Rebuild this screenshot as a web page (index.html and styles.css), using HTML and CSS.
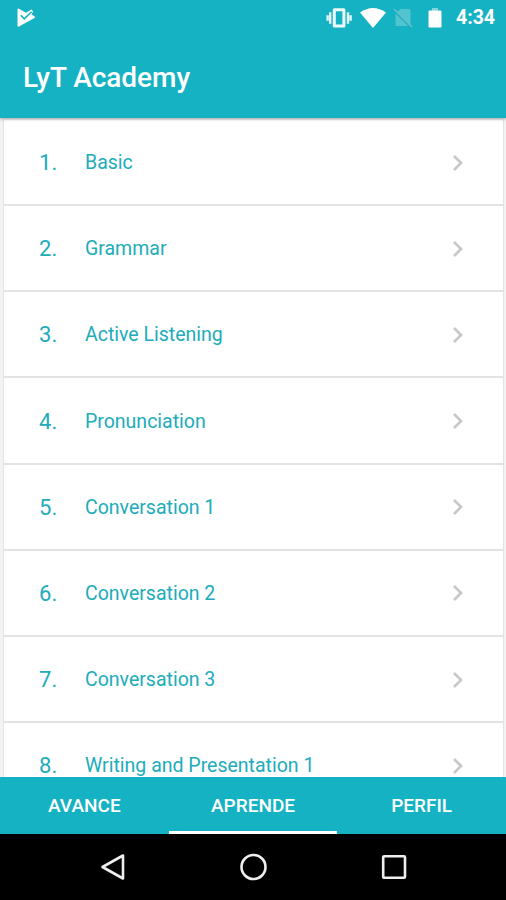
FILE: index.html
```html
<!DOCTYPE html>
<html lang="es">
<head>
<meta charset="utf-8">
<title>LyT Academy</title>
<link rel="stylesheet" href="styles.css">
</head>
<body>
<div class="screen">
  <header class="header">
    <div class="status">
      <svg class="notice" width="20" height="20" viewBox="0 0 20 20"><path fill="#fff" d="M1.5 1.5Q1.5 0 3 .8L10 4.8L15.5 1.5L17 3.5L15.5 6.5L18.8 8.5Q19.5 9.3 18.5 10L3 18.6Q1.5 19.2 1.5 17.8Z"/><path d="M4.8 7.2L8.3 10.8L15.6 3.7" fill="none" stroke="#14b2c3" stroke-width="1.6"/></svg>
      <svg width="27" height="20" viewBox="0 0 27 20"><path fill="none" stroke="#fff" stroke-opacity=".93" stroke-width="3" stroke-linejoin="round" d="M8.3 1.8h9.6v16.2H8.3z"/><path stroke="#fff" stroke-opacity=".88" stroke-width="2.4" d="M4.2 4.2v11.6M22 4.2v11.6M1.6 7.2v5.6M24.6 7.2v5.6"/></svg>
      <svg class="wifi" width="26" height="20" viewBox="0 0 26 20"><path fill="#fff" d="M0 4.5Q13-4.5 26 4.5L13 20Z"/></svg>
      <svg class="sim" width="20" height="20" viewBox="0 0 20 20"><path fill="#51c4d0" d="M7.5 1H16q1.5 0 1.5 1.5V18H2.5V6Z"/><path d="M1 2.5L18.5 20" stroke="#14b2c3" stroke-width="2"/><path d="M1 1L19 19" stroke="#6cbfc6" stroke-width="1.6"/></svg>
      <svg class="battery" width="14" height="20" viewBox="0 0 14 20"><path fill="#7dd4dc" d="M4 0h6v3H4z"/><path fill="#fff" d="M1.5 2.5h11q1 0 1 1v15q0 1-1 1h-11q-1 0-1-1v-15q0-1 1-1z"/></svg>
      <span class="time">4:34</span>
    </div>
    <h1 class="title">LyT Academy</h1>
  </header>
  <main class="list">
    <div class="row"><span class="num">1.</span><span class="name">Basic</span><svg class="chev" viewBox="0 0 12 18"><path d="M2 2l7 7-7 7"/></svg></div>
    <div class="row"><span class="num">2.</span><span class="name">Grammar</span><svg class="chev" viewBox="0 0 12 18"><path d="M2 2l7 7-7 7"/></svg></div>
    <div class="row"><span class="num">3.</span><span class="name">Active Listening</span><svg class="chev" viewBox="0 0 12 18"><path d="M2 2l7 7-7 7"/></svg></div>
    <div class="row"><span class="num">4.</span><span class="name">Pronunciation</span><svg class="chev" viewBox="0 0 12 18"><path d="M2 2l7 7-7 7"/></svg></div>
    <div class="row"><span class="num">5.</span><span class="name">Conversation 1</span><svg class="chev" viewBox="0 0 12 18"><path d="M2 2l7 7-7 7"/></svg></div>
    <div class="row"><span class="num">6.</span><span class="name">Conversation 2</span><svg class="chev" viewBox="0 0 12 18"><path d="M2 2l7 7-7 7"/></svg></div>
    <div class="row"><span class="num">7.</span><span class="name">Conversation 3</span><svg class="chev" viewBox="0 0 12 18"><path d="M2 2l7 7-7 7"/></svg></div>
    <div class="row"><span class="num">8.</span><span class="name">Writing and Presentation 1</span><svg class="chev" viewBox="0 0 12 18"><path d="M2 2l7 7-7 7"/></svg></div>
  </main>
  <nav class="tabs">
    <div class="tab">AVANCE</div>
    <div class="tab active">APRENDE</div>
    <div class="tab">PERFIL</div>
  </nav>
  <footer class="system">
    <svg width="28" height="30" viewBox="0 0 28 30"><path d="M24 3.5v23L3.5 15z"/></svg>
    <svg width="28" height="30" viewBox="0 0 28 30"><circle cx="14.5" cy="15" r="12"/></svg>
    <svg width="28" height="30" viewBox="0 0 28 30"><rect x="3.2" y="4.2" width="21.8" height="21.6" rx="1"/></svg>
  </footer>
</div>
</body>
</html>
```
FILE: styles.css
```css
* { box-sizing: border-box; }
body { margin: 0; font-family: Roboto, "Liberation Sans", sans-serif; }
.screen { display: flex; flex-direction: column; width: 506px; height: 900px; overflow: hidden; background: #fff; }
.header { position: relative; z-index: 1; flex: 0 0 118px; background: #14b2c3; color: #fff; box-shadow: 0 1px 3px rgba(0, 0, 0, .35); }
.status { display: flex; align-items: center; height: 35px; padding: 0 11px 0 16px; }
.notice { margin-right: auto; }
.wifi { margin-left: 7px; }
.sim { margin-left: 7px; }
.battery { margin-left: 15px; }
.time { width: 39px; margin-left: 14px; font-size: 19.5px; font-weight: 700; line-height: 37px; white-space: nowrap; }
.title { margin: 21px 0 0 23px; font-size: 28px; line-height: 44px; font-weight: 500; letter-spacing: -.05px; }
.list { flex: 0 0 659px; overflow: hidden; padding: 2px 2px 0 3px; background: #f3f3f3; }
.row { display: flex; align-items: center; height: 86.17px; padding: 1px 39px 0 35px; border: solid #e3e3e3; border-width: 0 1px 2px; background: #fff; color: #20acba; }
.num { width: 46px; font-size: 22px; letter-spacing: .1px; }
.name { font-size: 19.5px; }
.chev { width: 12px; height: 18px; margin-left: auto; fill: none; stroke: #c8c8c8; stroke-width: 2.7; }
.tabs { display: flex; flex: 0 0 56px; background: #14b2c3; color: #fff; }
.tab { flex: 1; font-size: 19px; font-weight: 500; line-height: 57px; text-align: center; }
.active { box-shadow: inset 0 -3px #fff; }
.system { display: flex; flex: 0 0 67px; align-items: center; justify-content: center; gap: 112.5px; padding-bottom: 1px; background: #000; }
.system svg { fill: none; stroke: #eee; stroke-width: 2.6; stroke-linejoin: round; }
```
